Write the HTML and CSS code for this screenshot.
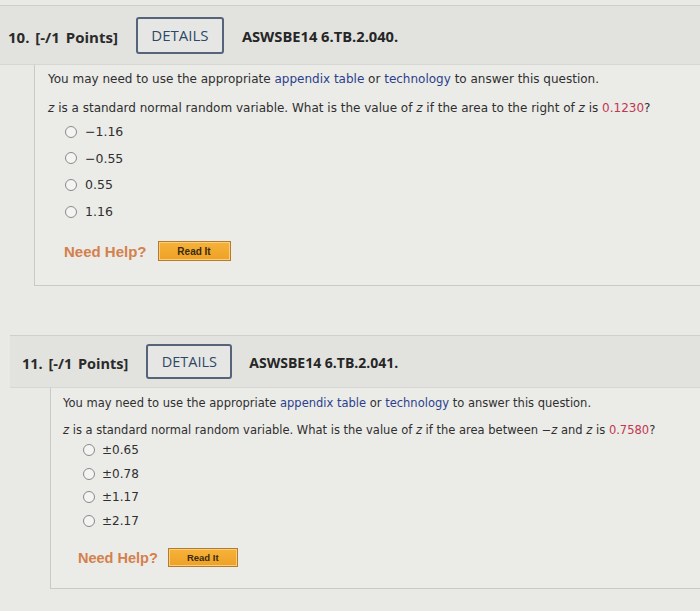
FILE: index.html
```html
<!DOCTYPE html>
<html>
<head>
<meta charset="utf-8">
<link rel="stylesheet" href="styles.css">
</head>
<body>
<div class="page">
  <section class="question q10">
    <div class="q-head">
      <span class="q-num">10. [-/1 Points]</span>
      <span class="details">DETAILS</span>
      <span class="q-code">ASWSBE14 6.TB.2.040.</span>
    </div>
    <div class="q-body">
      <p class="note">You may need to use the appropriate <span class="link">appendix table</span> or <span class="link">technology</span> to answer this question.</p>
      <p class="prompt"><i>z</i> is a standard normal random variable. What is the value of <i>z</i> if the area to the right of <i>z</i> is <span class="val">0.1230</span>?</p>
      <ul class="options">
        <li><span class="radio"></span>&minus;1.16</li>
        <li><span class="radio"></span>&minus;0.55</li>
        <li><span class="radio"></span>0.55</li>
        <li><span class="radio"></span>1.16</li>
      </ul>
      <div class="help">
        <span class="help-label">Need Help?</span>
        <span class="read-it">Read It</span>
      </div>
    </div>
  </section>

  <section class="question q11">
    <div class="q-head">
      <span class="q-num">11. [-/1 Points]</span>
      <span class="details">DETAILS</span>
      <span class="q-code">ASWSBE14 6.TB.2.041.</span>
    </div>
    <div class="q-body">
      <p class="note">You may need to use the appropriate <span class="link">appendix table</span> or <span class="link">technology</span> to answer this question.</p>
      <p class="prompt"><i>z</i> is a standard normal random variable. What is the value of <i>z</i> if the area between &minus;<i>z</i> and <i>z</i> is <span class="val">0.7580</span>?</p>
      <ul class="options">
        <li><span class="radio"></span>&plusmn;0.65</li>
        <li><span class="radio"></span>&plusmn;0.78</li>
        <li><span class="radio"></span>&plusmn;1.17</li>
        <li><span class="radio"></span>&plusmn;2.17</li>
      </ul>
      <div class="help">
        <span class="help-label">Need Help?</span>
        <span class="read-it">Read It</span>
      </div>
    </div>
  </section>
</div>
</body>
</html>
```

FILE: styles.css
```css
html, body {
  margin: 0;
  padding: 0;
}
body {
  background: #e9e9e6;
  color: #2f2f2f;
  font-family: "DejaVu Sans", Verdana, sans-serif;
  width: 700px;
  height: 611px;
  overflow: hidden;
}
.page {
  padding-top: 5px;
}
.question {
  display: flex;
  flex-direction: column;
}
.q-head {
  display: flex;
  align-items: center;
  background: #e2e2df;
  border-top: 1px solid #cfcfcc;
  border-bottom: 1px solid #d6d6d3;
  font-family: "Open Sans", "DejaVu Sans", sans-serif;
}
.q-num {
  font-weight: 700;
  color: #2a2a2a;
  word-spacing: 2px;
}
.details {
  border: 2px solid #55647a;
  border-radius: 3px;
  color: #2d4766;
  box-sizing: border-box;
  display: flex;
  align-items: center;
  justify-content: center;
  background: #e6e7e5;
}
.q-code {
  font-weight: 700;
  color: #262626;
}
.q-body {
  border-left: 1px solid #c9c9c6;
  border-bottom: 1px solid #c9c9c6;
  background: #ebebe8;
}
.note, .prompt {
  margin: 0;
}
.link {
  color: #2c3f8c;
}
.val {
  color: #c2364f;
}
.options {
  list-style: none;
  margin: 0;
  padding: 0;
  display: flex;
  flex-direction: column;
}
.options li {
  display: flex;
  align-items: center;
}
.radio {
  border: 1px solid #8a8a8a;
  border-radius: 50%;
  background: #f4f4f2;
  box-sizing: border-box;
}
.help {
  display: flex;
  align-items: center;
}
.help-label {
  font-family: "Liberation Sans", Arial, sans-serif;
  font-weight: 700;
  color: #d4804c;
}
.read-it {
  font-family: "Liberation Sans", Arial, sans-serif;
  font-weight: 700;
  color: #3a2a10;
  background: linear-gradient(#f7b23a, #eea126);
  border: 1px solid #b57a2a;
  box-shadow: inset 0 0 0 1px #f8cf7c;
  box-sizing: border-box;
  display: flex;
  align-items: center;
  justify-content: center;
}

/* question 10 */
.q10 .q-head {
  height: 58px;
  padding-left: 8px;
  font-size: 15px;
}
.q10 .q-num {
  padding-top: 4px;
}
.q10 .details {
  width: 88px;
  height: 37px;
  margin-left: 18px;
  font-size: 15px;
}
.q10 .q-code {
  margin-left: 18px;
  font-size: 14.7px;
  padding-top: 2px;
}
.q10 .q-body {
  margin-left: 34px;
  padding: 7px 0 24px 13px;
  font-size: 12px;
}
.q10 .prompt {
  margin-top: 15px;
}
.q10 .options {
  margin-top: 9px;
  padding-left: 17px;
  gap: 11.7px;
}
.q10 .options li {
  height: 15px;
  font-size: 12.5px;
}
.q10 .radio {
  width: 12px;
  height: 12px;
  margin-right: 8px;
}
.q10 .help {
  margin-top: 22px;
  padding-left: 16px;
}
.q10 .help-label {
  font-size: 15px;
}
.q10 .read-it {
  width: 73px;
  height: 20px;
  margin-left: 11px;
  font-size: 10px;
}

/* question 11 */
.q11 {
  margin-top: 49px;
  margin-left: 10px;
}
.q11 .q-head {
  height: 51px;
  padding-left: 12px;
  font-size: 14.5px;
}
.q11 .q-num {
  padding-top: 3px;
}
.q11 .details {
  width: 86px;
  height: 35px;
  margin-left: 18px;
  font-size: 14.5px;
}
.q11 .q-code {
  margin-left: 17px;
  font-size: 14px;
  padding-top: 2px;
}
.q11 .q-body {
  margin-left: 40px;
  padding: 8px 0 21px 12px;
  font-size: 11.5px;
}
.q11 .prompt {
  margin-top: 13px;
}
.q11 .options {
  margin-top: 6px;
  padding-left: 20px;
  gap: 9.7px;
}
.q11 .options li {
  height: 14px;
  font-size: 12px;
}
.q11 .radio {
  width: 12px;
  height: 12px;
  margin-right: 7px;
}
.q11 .help {
  margin-top: 20px;
  padding-left: 15px;
}
.q11 .help-label {
  font-size: 14.5px;
}
.q11 .read-it {
  width: 70px;
  height: 19px;
  margin-left: 10px;
  font-size: 9.5px;
}
```
